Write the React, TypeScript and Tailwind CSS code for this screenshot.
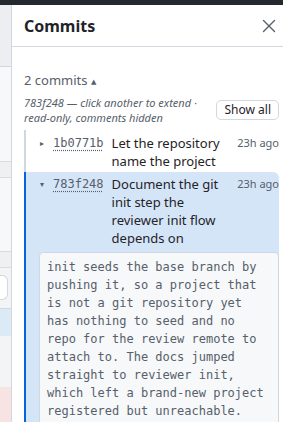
import React from 'react';

const sans = { fontFamily: '"Noto Sans", "DejaVu Sans", sans-serif' };

interface Commit {
  hash: string;
  message: string;
  age: string;
  body?: string;
}

const commits: Commit[] = [
  { hash: '1b0771b', message: 'Let the repository name the project', age: '23h ago' },
  {
    hash: '783f248',
    message: 'Document the git init step the reviewer init flow depends on',
    age: '23h ago',
    body:
      'init seeds the base branch by pushing it, so a project that is not a git repository yet has nothing to seed and no repo for the review remote to attach to. The docs jumped straight to reviewer init, which left a brand-new project registered but unreachable.',
  },
];

function BackgroundStrip() {
  return (
    <div className="w-[12px] shrink-0 flex flex-col border-r border-[#d0d7de] overflow-hidden">
      <div className="h-[62px] bg-[#eceef1] border-b border-[#d0d7de]" />
      <div className="h-[95px] bg-[#f7f8f9] border-b border-[#d8dce0]" />
      <div className="h-[16px] bg-[#eef0f2] border-b border-[#d8dce0]" />
      <div className="h-[74px] bg-[#f7f8f9] border-b border-[#d8dce0]" />
      <div className="h-[16px] bg-[#eef0f2] border-b border-[#d8dce0]" />
      <div className="h-[41px] bg-[#f3f4f6] border-b border-[#d0d7de] pt-[7px]">
        <div className="h-[25px] w-[8px] bg-white border border-[#d0d7de] rounded-r-[6px] border-l-0" />
      </div>
      <div className="h-[27px] bg-[#dbeaf5]" />
      <div className="h-[51px] bg-[#f3f4f6]" />
      <div className="flex-1 bg-[#f8e3e3]" />
    </div>
  );
}

function CommitRow({ commit, open }: { commit: Commit; open: boolean }) {
  return (
    <div
      className={`pl-[14px] border-l-2 ${
        open ? 'bg-[#d5e5f8] border-[#0b63d8] rounded-tr-[6px] pt-[3px] pb-[6px]' : 'border-[#d0d7de] pt-[4px] pb-[2px]'
      }`}
    >
      <div className="flex items-start gap-[7px] text-[13px] leading-[18px]">
        <span className="w-[6px] text-[8px] text-[#57606a] leading-[18px] shrink-0">{open ? '▾' : '▸'}</span>
        <span className="font-['DejaVu_Sans_Mono',monospace] text-[12px] text-[#57606a] underline decoration-dotted underline-offset-[3px] shrink-0">
          {commit.hash}
        </span>
        <span className="flex-1 text-[#1f2328] pl-[1px]">{commit.message}</span>
        <span className="text-[11px] text-[#57606a] shrink-0 pl-[4px]">{commit.age}</span>
      </div>
      {open && commit.body && (
        <div className="mt-[5px] -ml-[1px] bg-[#f6f8fa] border border-[#d0d7de] rounded-[4px] pl-[7px] pr-[10px] pt-[5px] pb-[8px] font-['DejaVu_Sans_Mono',monospace] text-[12px] leading-[18px] text-[#57606a] whitespace-pre-wrap">
          {commit.body}
        </div>
      )}
    </div>
  );
}

export default function App() {
  return (
    <div className="w-[283px] h-[422px] overflow-hidden flex flex-col bg-white" style={sans}>
      <div className="h-[5px] bg-[#24292f] shrink-0" />
      <div className="flex flex-1 min-h-0">
        <BackgroundStrip />
        <div className="flex-1 min-w-0 flex flex-col bg-white">
          {/* Header */}
          <div className="h-[42px] shrink-0 flex items-center justify-between pl-[12px] pr-[6px] border-b border-[#d0d7de]">
            <h2 className="text-[16px] font-bold text-[#1f2328]">Commits</h2>
            <svg width="14" height="14" viewBox="0 0 14 14" className="mr-[1px]">
              <path d="M1.5 1.5 L12.5 12.5 M12.5 1.5 L1.5 12.5" stroke="#57606a" strokeWidth="1.4" strokeLinecap="round" />
            </svg>
          </div>

          {/* Body */}
          <div className="pl-[12px] pr-[4px] pt-[24px]">
            <div className="text-[13px] leading-[18px] text-[#57606a]">
              2 commits <span className="text-[7px] align-middle">▲</span>
            </div>
            <div className="mt-[4px] flex items-center justify-between gap-2">
              <p className="text-[11px] leading-[15px] italic text-[#57606a] w-[185px]">
                783f248 — click another to extend · read-only, comments hidden
              </p>
              <button className="h-[20px] px-[7px] shrink-0 whitespace-nowrap text-[12px] leading-none text-[#1f2328] border border-[#d0d7de] rounded-[5px] bg-white">
                Show all
              </button>
            </div>
            <div className="mt-[5px] flex flex-col">
              {commits.map((c, i) => (
                <CommitRow key={c.hash} commit={c} open={i === 1} />
              ))}
            </div>
          </div>
        </div>
      </div>
    </div>
  );
}
